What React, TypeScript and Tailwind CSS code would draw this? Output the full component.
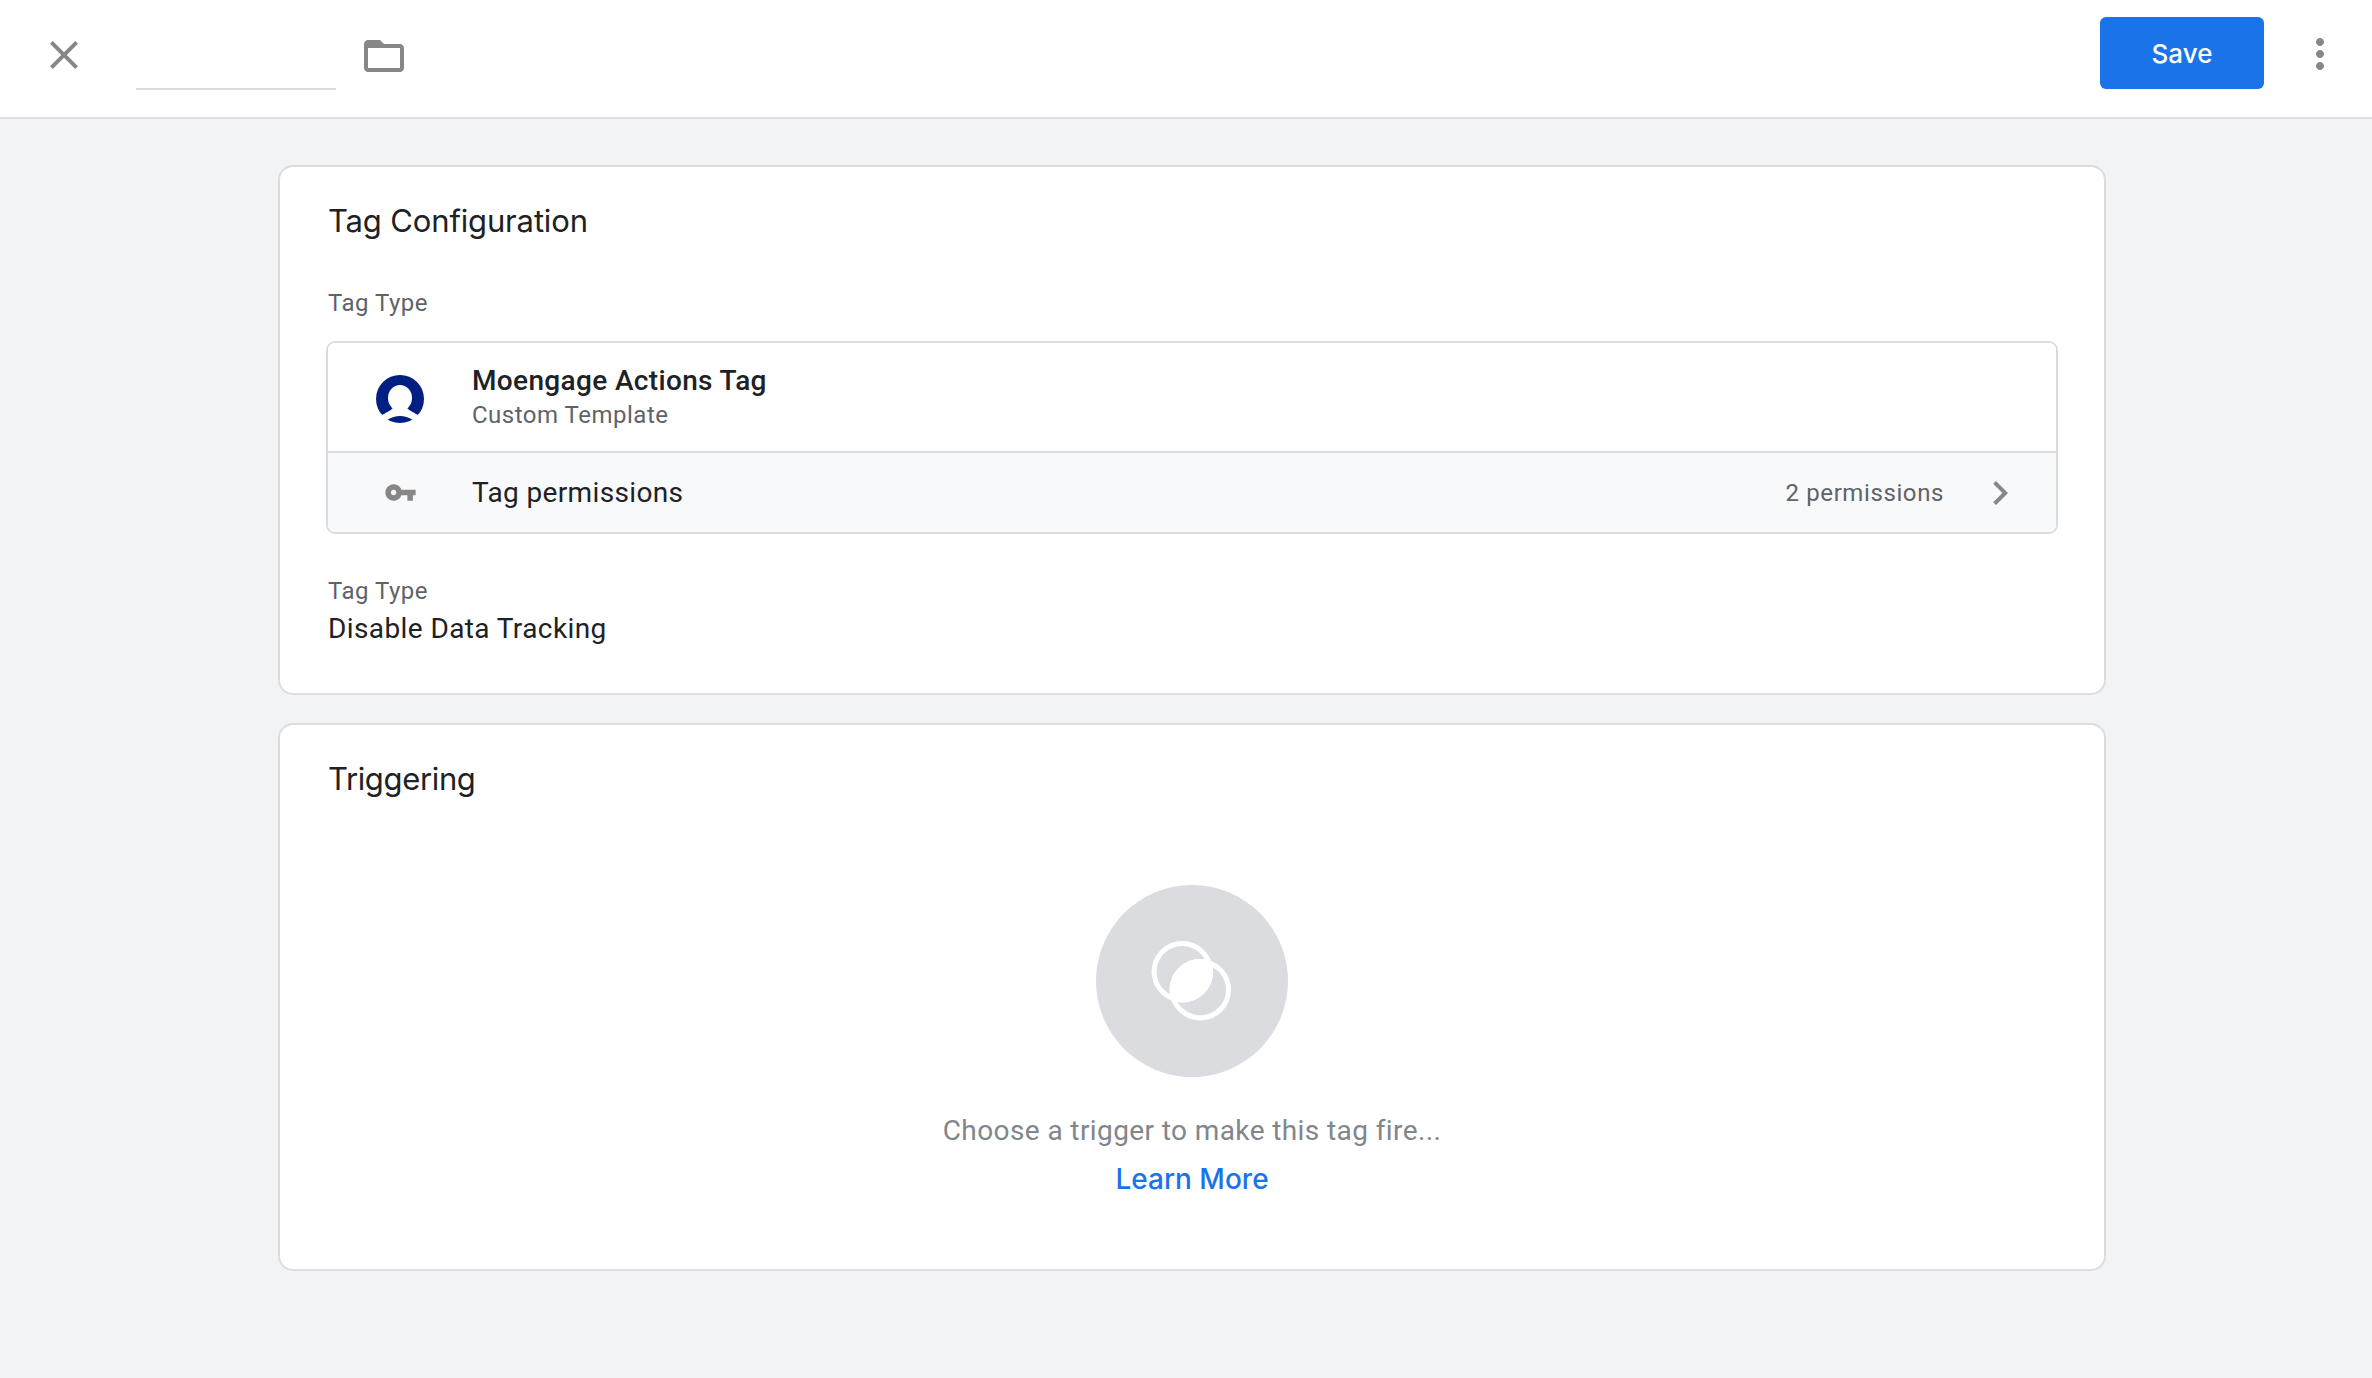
export default function App() {
  const roboto = "font-['Roboto',sans-serif]";
  const heading = "font-['Inter',sans-serif]";
  return (
    <div className={`min-h-[1378px] bg-[#f1f3f4] ${roboto}`}>
      <header className="h-[119px] bg-white border-b-2 border-[#dadce0] flex items-center">
        <div className="w-[136px] pl-[40px] flex items-center mt-[-8px]">
          <svg viewBox="0 0 24 24" className="w-[48px] h-[48px] fill-[#878787]">
            <path d="M19 6.41L17.59 5 12 10.59 6.41 5 5 6.41 10.59 12 5 17.59 6.41 19 12 13.41 17.59 19 19 17.59 13.41 12z" />
          </svg>
        </div>
        <div className="w-[200px] h-[60px] border-b-2 border-[#dadce0] self-start mt-[30px]" />
        <svg viewBox="0 0 24 24" className="ml-[24px] w-[48px] h-[48px] fill-[#878787] mt-[-6px]">
          <path d="M20 6h-8l-2-2H4c-1.1 0-1.99.9-1.99 2L2 18c0 1.1.9 2 2 2h16c1.1 0 2-.9 2-2V8c0-1.1-.9-2-2-2zm0 12H4V8h16v10z" />
        </svg>
        <div className="flex-1" />
        <button className={`w-[164px] h-[72px] rounded-[6px] bg-[#1a73e8] text-white text-[26px] font-medium mt-[-11px] ${heading}`}>
          Save
        </button>
        <svg viewBox="0 0 24 24" className="ml-[32px] mr-[28px] w-[48px] h-[48px] fill-[#878787] mt-[-9px]">
          <path d="M12 8c1.1 0 2-.9 2-2s-.9-2-2-2-2 .9-2 2 .9 2 2 2zm0 2c-1.1 0-2 .9-2 2s.9 2 2 2 2-.9 2-2-.9-2-2-2zm0 6c-1.1 0-2 .9-2 2s.9 2 2 2 2-.9 2-2-.9-2-2-2z" />
        </svg>
      </header>

      <main className="ml-[278px] w-[1828px] pt-[46px] flex flex-col gap-[28px]">
        <section className="bg-white border-2 border-[#dadce0] rounded-[15px] pl-[46px] pr-[46px] pt-[36px] pb-[46px]">
          <h2 className={`ml-[2px] text-[31px] leading-[36px] tracking-[-0.15px] text-[#202124] ${heading}`}>Tag Configuration</h2>
          <div className="ml-[2px] mt-[49px] text-[24px] leading-[30px] text-[#5f6368] tracking-[0.5px]">Tag Type</div>
          <div className="mt-[23px] border-2 border-[#dadce0] rounded-[9px] overflow-hidden">
            <div className="h-[108px] bg-white flex items-center">
              <div className="w-[144px] flex justify-center">
                <svg viewBox="0 0 48 48" className="w-[48px] h-[48px] mt-[3px]">
                  <circle cx="24" cy="24" r="24" fill="#001f82" />
                  <ellipse cx="24" cy="23" rx="12" ry="13" fill="#fff" />
                  <path d="M4 41 Q14 36 17 33 L31 33 Q34 36 44 41 L37 45 Q24 37 11 45 Z" fill="#fff" />
                </svg>
              </div>
              <div className="flex flex-col">
                <div className="text-[28px] leading-[34px] font-medium text-[#202124] tracking-[0.35px]">Moengage Actions Tag</div>
                <div className="text-[24px] leading-[30px] text-[#5f6368] tracking-[0.5px] mt-[2px]">Custom Template</div>
              </div>
            </div>
            <div className="h-[81px] bg-[#f8f9fa] border-t-2 border-[#dadce0] flex items-center">
              <div className="w-[144px] flex justify-center">
                <svg viewBox="0 0 24 24" className="w-[33px] h-[33px] fill-[#878787]">
                  <path d="M12.65 10C11.83 7.67 9.61 6 7 6c-3.31 0-6 2.69-6 6s2.69 6 6 6c2.61 0 4.83-1.67 5.65-4H17v4h4v-4h2v-4H12.65zM7 14c-1.1 0-2-.9-2-2s.9-2 2-2 2 .9 2 2-.9 2-2 2z" />
                </svg>
              </div>
              <div className="text-[28px] leading-[36px] text-[#202124] tracking-[0.35px]">Tag permissions</div>
              <div className="flex-1" />
              <div className="text-[24px] leading-[30px] text-[#5f6368] tracking-[0.6px]">2 permissions</div>
              <svg viewBox="0 0 24 24" className="w-[48px] h-[48px] fill-[#878787] ml-[32px] mr-[32px]">
                <path d="M10 6L8.59 7.41 13.17 12l-4.58 4.59L10 18l6-6z" />
              </svg>
            </div>
          </div>
          <div className="ml-[2px] mt-[42px] text-[24px] leading-[30px] text-[#5f6368] tracking-[0.5px]">Tag Type</div>
          <div className="ml-[2px] mt-[5px] text-[28px] leading-[36px] text-[#202124] tracking-[0.4px]">Disable Data Tracking</div>
        </section>

        <section className="bg-white border-2 border-[#dadce0] rounded-[15px] pl-[47px] pr-[47px] pt-[36px] pb-[72px] flex flex-col">
          <h2 className={`ml-[1px] text-[31px] leading-[36px] tracking-[-0.35px] text-[#202124] ${heading}`}>Triggering</h2>
          <div className="mt-[88px] w-[192px] h-[192px] rounded-full bg-[#dadce0] self-center">
            <svg viewBox="0 0 192 192" className="w-[192px] h-[192px]">
              <defs>
                <clipPath id="lens">
                  <circle cx="86.3" cy="86.7" r="30.7" />
                </clipPath>
              </defs>
              <circle cx="86.3" cy="86.7" r="28.2" fill="none" stroke="#fff" strokeWidth="5" />
              <circle cx="104.3" cy="104.7" r="28.2" fill="none" stroke="#fff" strokeWidth="5" />
              <circle cx="104.3" cy="104.7" r="30.7" fill="#fff" clipPath="url(#lens)" />
            </svg>
          </div>
          <div className="mt-[36px] text-center text-[28px] leading-[36px] text-[#80868b] tracking-[0.4px]">Choose a trigger to make this tag fire...</div>
          <a className={`mt-[12px] text-center text-[28px] leading-[36px] text-[#1a73e8] font-medium ${heading}`}>Learn More</a>
        </section>
      </main>
    </div>
  );
}
